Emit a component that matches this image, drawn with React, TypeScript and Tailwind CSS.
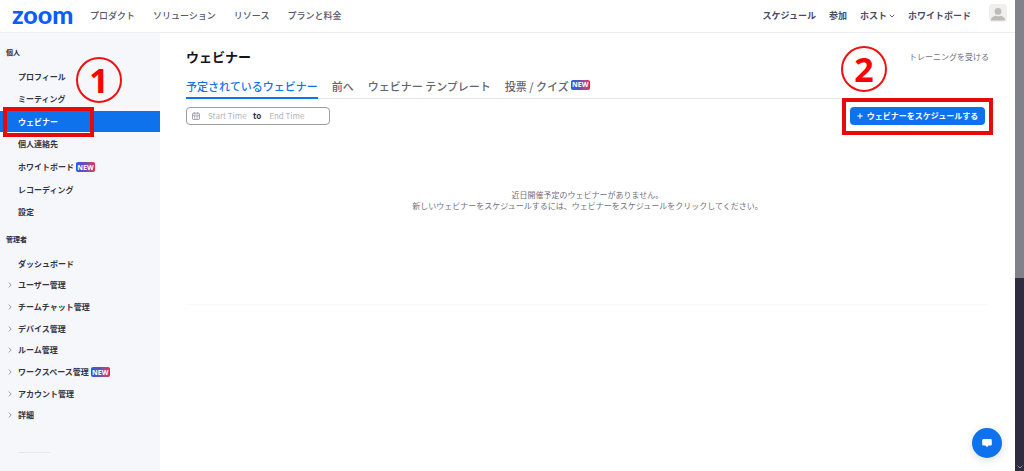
import React from 'react';

type NavItem = { label: string; isNew?: boolean; active?: boolean; expandable?: boolean };

const personalItems: NavItem[] = [
  { label: 'プロフィール' },
  { label: 'ミーティング' },
  { label: 'ウェビナー', active: true },
  { label: '個人連絡先' },
  { label: 'ホワイトボード', isNew: true },
  { label: 'レコーディング' },
  { label: '設定' },
];

const adminItems: NavItem[] = [
  { label: 'ダッシュボード' },
  { label: 'ユーザー管理', expandable: true },
  { label: 'チームチャット管理', expandable: true },
  { label: 'デバイス管理', expandable: true },
  { label: 'ルーム管理', expandable: true },
  { label: 'ワークスペース管理', isNew: true, expandable: true },
  { label: 'アカウント管理', expandable: true },
  { label: '詳細', expandable: true },
];

function NewBadge() {
  return (
    <span className="flex h-[10px] w-[19px] shrink-0 items-center justify-center rounded-[2px] bg-linear-to-r from-[#0b5cf0] via-[#6a4cb8] to-[#f00f48] font-['Open_Sans'] text-[7px] leading-none font-bold text-white">
      NEW
    </span>
  );
}

function StepMark({ n, place }: { n: number; place: string }) {
  return (
    <span
      className={`pointer-events-none absolute z-10 flex size-[46px] items-center justify-center rounded-full border-2 border-[#f01010] font-['Open_Sans'] text-[34px] leading-none font-bold text-[#fa0000] ${place}`}
    >
      {n}
    </span>
  );
}

function NavRow({ item }: { item: NavItem }) {
  return (
    <li className="relative">
      <a
        href="#"
        className={`flex h-[21px] items-center gap-[2px] pl-[18px] text-[8px] font-bold whitespace-nowrap ${
          item.active ? 'bg-[#0e72ed] text-white' : 'text-[#34343f]'
        }`}
      >
        {item.expandable && (
          <svg viewBox="0 0 4 6" className="-ml-[10px] mr-1 h-[6px] w-[4px]" fill="none" stroke="#8c8f9c" strokeWidth="0.9">
            <path d="M0.8 0.6 3.2 3 0.8 5.4" />
          </svg>
        )}
        {item.label}
        {item.isNew && <NewBadge />}
      </a>
      {item.active && (
        <>
          <span className="pointer-events-none absolute -top-1 left-[3px] h-[30px] w-[91px] border-4 border-[#e60a0a]" />
          <StepMark n={1} place="-top-[54px] left-[76px]" />
        </>
      )}
    </li>
  );
}

function Header() {
  return (
    <header className="flex h-[33px] items-center border-b border-[#ededf2] pr-2 pl-3 text-[9px] font-medium whitespace-nowrap text-[#55576b]">
      <a href="#" className="w-[60px] pb-1 font-['Lato'] text-[25px] leading-none font-black text-[#0b5cff]">
        zoom
      </a>
      <nav className="ml-[18px] flex gap-[18px]">
        <a href="#">プロダクト</a>
        <a href="#">ソリューション</a>
        <a href="#">リソース</a>
        <a href="#">プランと料金</a>
      </nav>
      <nav className="ml-auto flex items-center gap-[13px] font-bold text-[#4b4a66]">
        <a href="#">スケジュール</a>
        <a href="#">参加</a>
        <a href="#" className="flex items-center gap-[2px]">
          ホスト
          <svg viewBox="0 0 6 4" className="h-[4px] w-[6px]" fill="none" stroke="currentColor" strokeWidth="0.9">
            <path d="M0.8 0.8 3 3 5.2 0.8" />
          </svg>
        </a>
        <a href="#">ホワイトボード</a>
      </nav>
      <button type="button" aria-label="アカウント" className="mb-[6px] ml-[18px] size-[18px] overflow-hidden rounded-[4px] bg-[#f0efed]">
        <svg viewBox="0 0 18 18" className="size-full" fill="#bdbcbb">
          <circle cx="9" cy="7.4" r="3.4" />
          <path d="M1.8 16.6c0-3 2.4-4.6 5-4.9.7.4 1.4.5 2.2.5s1.5-.1 2.2-.5c2.6.3 5 1.9 5 4.9z" />
        </svg>
      </button>
    </header>
  );
}

function Sidebar() {
  return (
    <aside className="w-[160px] shrink-0 bg-[#f6f7fb] pt-[13px]">
      <h2 className="pl-[6px] text-[7px] leading-[12px] font-bold text-[#2c2c3c]">個人</h2>
      <ul className="mt-2 flex h-[157px] flex-col justify-between">
        {personalItems.map((i) => (
          <NavRow key={i.label} item={i} />
        ))}
      </ul>
      <h2 className="mt-[10px] pl-[6px] text-[7px] leading-[12px] font-bold text-[#2c2c3c]">管理者</h2>
      <ul className="mt-2 flex h-[173px] flex-col justify-between">
        {adminItems.map((i) => (
          <NavRow key={i.label} item={i} />
        ))}
      </ul>
      <hr className="mt-[26px] ml-[18px] w-8 border-[#e6e7ec]" />
    </aside>
  );
}

function Main() {
  return (
    <main className="min-w-0 flex-1 px-[26px]">
      <div className="relative flex items-center justify-between pt-[15px]">
        <h1 className="text-[13px] leading-[18px] font-bold text-[#15151f]">ウェビナー</h1>
        <a href="#" className="text-[8px] text-[#6e7080]">
          トレーニングを受ける
        </a>
        <StepMark n={2} place="top-[13px] right-[102px]" />
      </div>

      <nav className="mt-[9px] flex h-[24px] gap-[14px] border-b border-[#e3e4ea] text-[11px] font-medium whitespace-nowrap text-[#62656f]">
        <a href="#" className="flex h-[24px] items-center border-b-2 border-[#0e72ed] text-[#0e72ed]">
          予定されているウェビナー
        </a>
        <a href="#" className="flex items-center">前へ</a>
        <a href="#" className="flex items-center">ウェビナー テンプレート</a>
        <a href="#" className="flex items-center gap-[2px]">
          投票 / クイズ
          <span className="mb-1">
            <NewBadge />
          </span>
        </a>
      </nav>

      <div className="mt-2 flex items-center justify-between pr-1">
        <div className="flex h-[18px] w-[144px] items-center rounded-[4px] border border-[#9a9ca8] pl-[5px] text-[8px]">
          <svg viewBox="0 0 8 8" className="mr-2 size-2 shrink-0" fill="none" stroke="#8b8e9b" strokeWidth="0.8">
            <rect x="0.5" y="1.2" width="7" height="6.3" rx="1" />
            <path d="M0.5 3.2h7M2.3 0.2v1.6M5.7 0.2v1.6M2 4.6h1M3.6 4.6h1M5.2 4.6h1M2 6h1M3.6 6h1M5.2 6h1" />
          </svg>
          <input aria-label="Start Time" placeholder="Start Time" className="w-[45px] outline-none placeholder:text-[#b4b5bd]" />
          <span className="mr-2 font-bold text-[#2c2c3c]">to</span>
          <input aria-label="End Time" placeholder="End Time" className="w-[45px] outline-none placeholder:text-[#b4b5bd]" />
        </div>
        <div className="relative">
          <button
            type="button"
            className="flex h-[18px] w-[135px] items-center justify-center gap-1 rounded-[4px] bg-[#0e72ed] text-[8px] font-bold whitespace-nowrap text-white"
          >
            <svg viewBox="0 0 6 6" className="size-[6px]" stroke="currentColor" strokeWidth="1">
              <path d="M3 0.3v5.4M0.3 3h5.4" />
            </svg>
            ウェビナーをスケジュールする
          </button>
          <span className="pointer-events-none absolute -inset-x-2 -top-[9px] -bottom-[10px] border-4 border-[#e60a0a]" />
        </div>
      </div>

      <p className="mt-[64px] text-center text-[8px] leading-[11px] text-[#6e7080]">
        近日開催予定のウェビナーがありません。
        <br />
        新しいウェビナーをスケジュールするには、ウェビナーをスケジュールをクリックしてください。
      </p>
      <hr className="mt-[93px] border-[#fafafb]" />
    </main>
  );
}

export default function App() {
  return (
    <div className="flex min-h-screen bg-white font-['Noto_Sans_CJK_JP',sans-serif]" lang="ja">
      <div className="flex min-w-0 flex-1 flex-col">
        <Header />
        <div className="flex flex-1">
          <Sidebar />
          <Main />
        </div>
      </div>
      <div className="flex w-[9px] shrink-0 flex-col bg-[#2f2c3f]" aria-hidden="true">
        <div className="h-[278px] bg-[#7f818b]" />
        <svg viewBox="0 0 6 4" className="mx-auto mt-auto mb-[2px] h-[4px] w-[6px]" fill="none" stroke="#8a8a96" strokeWidth="1">
          <path d="M0.6 0.6 3 3 5.4 0.6" />
        </svg>
      </div>
      <button
        type="button"
        aria-label="チャット"
        className="fixed right-[22px] bottom-[13px] flex size-[30px] items-center justify-center rounded-full bg-[#0e72ed] shadow-[0_2px_8px_rgba(0,0,0,0.15)]"
      >
        <svg viewBox="0 0 10 10" className="size-[10px]" fill="#fff">
          <path d="M1.5 1h7a1.3 1.3 0 0 1 1.3 1.3v4a1.3 1.3 0 0 1-1.3 1.3H6.4L5 9.2 3.6 7.6H1.5A1.3 1.3 0 0 1 .2 6.3v-4A1.3 1.3 0 0 1 1.5 1z" />
        </svg>
      </button>
    </div>
  );
}
